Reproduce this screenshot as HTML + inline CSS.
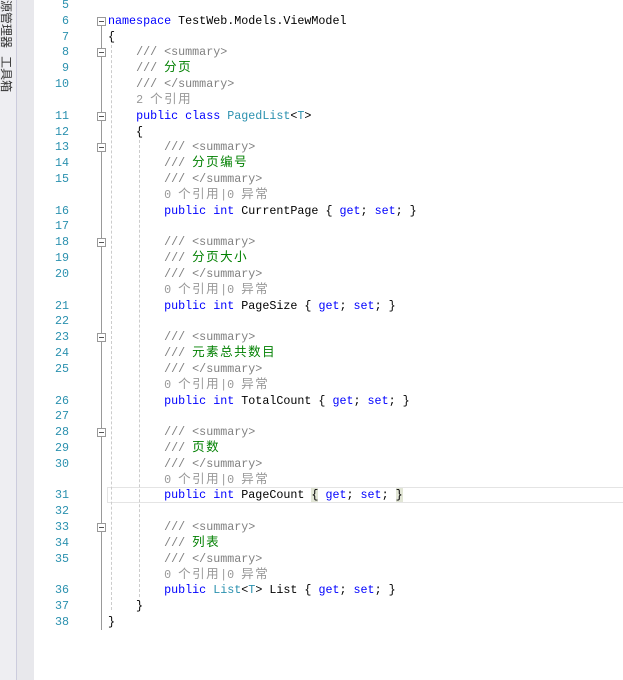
<!DOCTYPE html><html><head><meta charset="utf-8"><style>
body{margin:0;width:623px;height:680px;background:#fff;position:relative;overflow:hidden;font-family:"Liberation Mono","Noto Sans CJK SC",monospace;font-size:11.7px;}
#sb1{position:absolute;left:0;top:0;width:16px;height:680px;background:#eeeef2;border-right:1px solid #ccd;overflow:hidden}
#sb2{position:absolute;left:17px;top:0;width:17px;height:680px;background:#e8e8ec}
.vt{position:absolute;left:13px;top:-60px;transform-origin:0 0;transform:rotate(90deg);white-space:nowrap;font-family:"Noto Sans CJK SC",sans-serif;font-size:12px;line-height:14px;color:#333}
.r{position:absolute;left:0;height:16px;line-height:16px;white-space:pre;width:623px}
.n{position:absolute;left:40px;width:29px;text-align:right;color:#2b91af}
.c{position:absolute;left:108px}
.z{font-family:"Noto Sans CJK SC",sans-serif;font-size:12.5px;letter-spacing:1.5px;line-height:0}
.k{color:#0000ff}.t{color:#2b91af}.g{color:#808080}.gr{color:#008000}.l{color:#999}
.f{position:absolute;left:97px;width:7px;height:7px;border:1px solid #999;background:#fff}
.f:after{content:"";position:absolute;left:1px;top:3px;width:5px;height:1px;background:#555}
.v{position:absolute;width:1px;background:#999}
.d{position:absolute;width:0;border-left:1px dashed #ccc}
</style></head><body>
<div id="sb1"><div class="vt">解决方案资源管理器&nbsp;&nbsp;&nbsp;工具箱</div></div>
<div id="sb2"></div>
<div style="position:absolute;left:107px;top:487px;width:520px;height:14px;border:1px solid #e4e4e4"></div>
<div class="v" style="left:101px;top:24px;height:606px"></div>
<div class="d" style="left:111px;top:40px;height:570px"></div>
<div class="d" style="left:139px;top:135px;height:462px"></div>
<div id="L"></div>
<script>
function z(s){return '<span class="z">'+s+'</span>';}
var rows=[
["5",""],
["6",'<span class="k">namespace</span> TestWeb.Models.ViewModel',1],
["7","{"],
["8",'    <span class="g">/// &lt;summary&gt;</span>',1],
["9",'    <span class="g">///</span> <span class="gr">'+z("分页")+'</span>'],
["10",'    <span class="g">/// &lt;/summary&gt;</span>'],
["",'    <span class="l">2 '+z("个引用")+'</span>'],
["11",'    <span class="k">public class</span> <span class="t">PagedList</span>&lt;<span class="t">T</span>&gt;',1],
["12","    {"]];
var props=[["13","分页编号","CurrentPage","int"],["18","分页大小","PageSize","int"],["23","元素总共数目","TotalCount","int"],["28","页数","PageCount","int"],["33","列表","List","list"]];
props.forEach(function(p,i){var n=+p[0];
rows.push([n+"",'        <span class="g">/// &lt;summary&gt;</span>',1]);
rows.push([n+1+"",'        <span class="g">///</span> <span class="gr">'+z(p[1])+'</span>']);
rows.push([n+2+"",'        <span class="g">/// &lt;/summary&gt;</span>']);
rows.push(["",'        <span class="l">0 '+z("个引用")+'|0 '+z("异常")+'</span>']);
var ty=p[3]=="int"?'<span class="k">int</span>':'<span class="t">List</span>&lt;<span class="t">T</span>&gt;';
var br=p[2]=="PageCount"?'<span style="background:#e2e6d6">{</span> <span class="k">get</span>; <span class="k">set</span>; <span style="background:#e2e6d6">}</span>':'{ <span class="k">get</span>; <span class="k">set</span>; }';
rows.push([n+3+"",'        <span class="k">public</span> '+ty+' '+p[2]+' '+br]);
if(i<4)rows.push([n+4+"",""]);});
rows.push(["37","    }"]);rows.push(["38","}"]);
var h="";rows.forEach(function(r,i){var top=(-3+i*15.82).toFixed(2);
h+='<div class="r" style="top:'+top+'px"><span class="n">'+r[0]+'</span>'+(r[2]?'<span class="f" style="top:4px"></span>':'')+'<span class="c">'+r[1]+'</span></div>';});
document.getElementById("L").innerHTML=h;
</script>
</body></html>
